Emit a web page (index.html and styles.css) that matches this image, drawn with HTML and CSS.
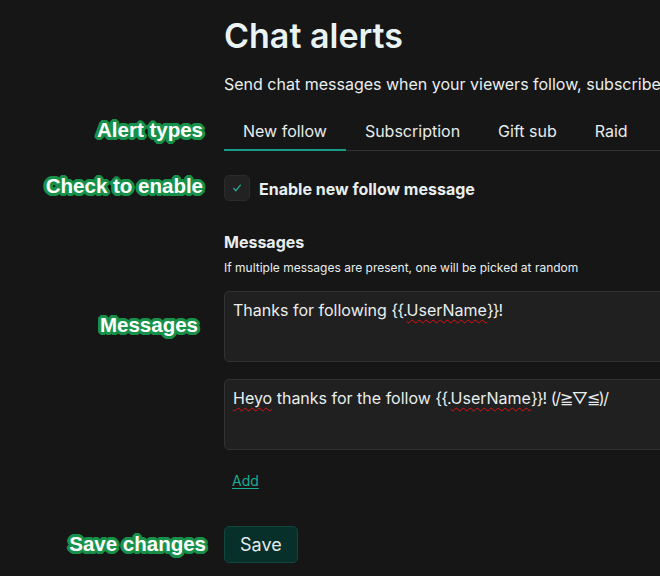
FILE: index.html
```html
<!DOCTYPE html>
<html lang="en">
<head>
<meta charset="utf-8">
<title>Chat alerts</title>
<link rel="stylesheet" href="styles.css">
</head>
<body>
<main class="page">
  <div class="row row-title">
    <span></span>
    <h1 class="title">Chat alerts</h1>
  </div>
  <div class="row row-sub">
    <span></span>
    <p class="subtitle">Send chat messages when your viewers follow, subscribe or raid your channel</p>
  </div>
  <div class="row row-tabs">
    <span class="note note-alert">Alert types</span>
    <nav class="tabs">
      <span class="tab active">New follow</span>
      <span class="tab">Subscription</span>
      <span class="tab">Gift sub</span>
      <span class="tab">Raid</span>
    </nav>
  </div>
  <div class="row row-check">
    <span class="note note-check">Check to enable</span>
    <label class="check">
      <span class="box"><svg width="12" height="12" viewBox="0 0 12 12"><path d="M2.6 6.4 L4.9 8.7 L9.4 3.2" fill="none" stroke="#1fb09c" stroke-width="1.3" stroke-linecap="round" stroke-linejoin="round"/></svg></span>
      <span class="check-text">Enable new follow message</span>
    </label>
  </div>
  <div class="row row-head">
    <span></span>
    <div>
      <h2 class="msg-title">Messages</h2>
      <p class="msg-help">If multiple messages are present, one will be picked at random</p>
    </div>
  </div>
  <div class="row row-msg1">
    <span class="note note-msg">Messages</span>
    <div class="field">Thanks for following <span class="brace">{{.</span><span class="typo">UserName</span><span class="brace">}}!</span></div>
  </div>
  <div class="row row-msg2">
    <span></span>
    <div class="field"><span class="typo">Heyo</span> thanks for the follow <span class="brace">{{.</span><span class="typo">UserName</span><span class="brace">}}!</span> <span class="kao">(/≧▽≦)/</span></div>
  </div>
  <div class="row row-add">
    <span></span>
    <div><a class="add" href="#">Add</a></div>
  </div>
  <div class="row row-save">
    <span class="note note-save">Save changes</span>
    <div><button class="save" type="button">Save</button></div>
  </div>
</main>
</body>
</html>
```
FILE: styles.css
```css
html, body {
  margin: 0;
  padding: 0;
  background: #161616;
  overflow: hidden;
}
body {
  font-family: Inter, "Noto Sans", "DejaVu Sans", sans-serif;
  color: #e9eeee;
  width: 660px;
  height: 576px;
}
.page {
  width: 1100px;
}
.row {
  display: grid;
  grid-template-columns: 224px 1fr;
  align-items: center;
}
.note {
  justify-self: end;
  margin-right: 21px;
  font-family: "Liberation Sans", Arial, sans-serif;
  font-weight: 700;
  font-size: 20.5px;
  line-height: 20px;
  color: #ffffff;
  white-space: nowrap;
  text-shadow:
    2px 0 0 #17914a, -2px 0 0 #17914a, 0 2px 0 #17914a, 0 -2px 0 #17914a,
    2px 2px 0 #17914a, -2px -2px 0 #17914a, 2px -2px 0 #17914a, -2px 2px 0 #17914a,
    3px 0 0 #17914a, -3px 0 0 #17914a, 0 3px 0 #17914a, 0 -3px 0 #17914a,
    3px 1px 0 #17914a, -3px 1px 0 #17914a, 3px -1px 0 #17914a, -3px -1px 0 #17914a,
    1px 3px 0 #17914a, -1px 3px 0 #17914a, 1px -3px 0 #17914a, -1px -3px 0 #17914a;
}
.note-alert { margin-right: 21px; }
.note-check { margin-right: 21px; margin-bottom: 4px; }
.note-msg { margin-right: 26px; margin-bottom: 3px; }
.note-save { margin-right: 18px; margin-bottom: 2px; }
.row-title { margin-top: 16px; }
.title {
  margin: 0;
  font-size: 34px;
  line-height: 40px;
  font-weight: 600;
  color: #eaf3f3;
}
.row-sub { margin-top: 16px; }
.subtitle {
  margin: 0;
  font-size: 16px;
  line-height: 24px;
  white-space: nowrap;
}
.row-tabs { margin-top: 13px; }
.tabs {
  display: flex;
  border-bottom: 1px solid #333333;
}
.tab {
  padding: 10px 19px 6px;
  line-height: 24px;
  font-size: 16px;
  border-bottom: 2px solid transparent;
  margin-bottom: -1px;
  color: #e6ecec;
}
.tab.active {
  border-bottom-color: #169c89;
}
.row-check { margin-top: 24px; }
.check {
  display: flex;
  align-items: center;
  gap: 9px;
}
.box {
  width: 24px;
  height: 24px;
  border: 1px solid #2b2b2b;
  border-radius: 5px;
  background: #222222;
  display: flex;
  align-items: center;
  justify-content: center;
}
.check-text {
  font-weight: 700;
  font-size: 16px;
  line-height: 24px;
  padding-top: 2px;
}
.row-head { margin-top: 29px; }
.msg-title {
  margin: 0;
  font-size: 16px;
  line-height: 24px;
  font-weight: 700;
}
.msg-help {
  margin: 6px 0 0;
  font-size: 12px;
  line-height: 16px;
}
.row-msg1 { margin-top: 15px; }
.row-msg2 { margin-top: 17px; }
.field {
  height: 53px;
  padding: 8px;
  border: 1px solid #323232;
  border-radius: 5px;
  background: #202020;
  font-size: 16px;
  line-height: 20px;
  white-space: nowrap;
}
.brace {
  letter-spacing: -1px;
}
.kao {
  letter-spacing: -1.3px;
}
.typo {
  text-decoration: underline wavy #e01010;
  text-decoration-thickness: 1px;
  text-underline-offset: 3px;
}
.row-add { margin-top: 20px; }
.add {
  margin-left: 8px;
  font-size: 14px;
  line-height: 20px;
  color: #1aab96;
  text-decoration: underline;
  text-underline-offset: 2px;
}
.row-save { margin-top: 35px; }
.save {
  font-family: Inter, "Noto Sans", sans-serif;
  font-size: 18px;
  line-height: 21px;
  padding: 7px 15px;
  border: 1px solid #0f463d;
  border-radius: 5px;
  background: #07302a;
  color: #e4eaea;
}
```
